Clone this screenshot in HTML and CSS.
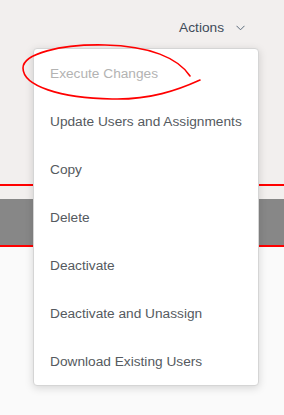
FILE: index.html
```html
<!DOCTYPE html>
<html lang="en">
<head>
  <meta charset="UTF-8">
  <meta name="viewport" content="width=device-width, initial-scale=1.0">
  <title>Users - Actions</title>
  <link rel="stylesheet" href="styles.css">
</head>
<body>
  <!-- Header with toolbar -->
  <div class="page-top">
    <div class="toolbar">
      <button class="actions-button">
        <span>Actions</span>
        <svg class="chevron" width="9" height="6" viewBox="0 0 9 6">
          <path d="M0.5 0.8 L4.5 4.8 L8.5 0.8" fill="none" stroke="#5b6b7b" stroke-width="1"/>
        </svg>
      </button>
    </div>
  </div>

  <div class="red-line"></div>
  <div class="gap"></div>
  <div class="gray-band"></div>
  <div class="red-line"></div>
  <div class="page-bottom"></div>

  <!-- Actions Menu -->
  <ul class="menu">
    <li class="menu-item disabled">Execute Changes</li>
    <li class="menu-item">Update Users and Assignments</li>
    <li class="menu-item">Copy</li>
    <li class="menu-item">Delete</li>
    <li class="menu-item">Deactivate</li>
    <li class="menu-item">Deactivate and Unassign</li>
    <li class="menu-item">Download Existing Users</li>
  </ul>

  <!-- Hand-drawn annotation -->
  <svg class="annotation" width="284" height="120" viewBox="0 0 284 120">
    <path d="M190 76 C178 58 150 46 105 45 C60 44 23 54 23 68 C23 86 60 98 112 99 C150 100 178 90 200 80"
          fill="none" stroke="#ff0000" stroke-width="1.6" stroke-linecap="round"/>
  </svg>
</body>
</html>
```

FILE: styles.css
```css
/* General Styles */
body {
  margin: 0;
  width: 284px;
  height: 415px;
  overflow: hidden;
  position: relative;
  font-family: 'Liberation Sans', Arial, sans-serif;
  background-color: #fafafa;
}

/* Header */
.page-top {
  height: 184px;
  background-color: #f2efee;
}

.toolbar {
  display: flex;
  justify-content: flex-end;
  padding: 17px 39px 0 0;
}

.actions-button {
  display: flex;
  align-items: center;
  gap: 12px;
  height: 20px;
  padding: 0;
  border: none;
  background: none;
  font-family: inherit;
  font-size: 13.7px;
  color: #3e4b59;
  cursor: pointer;
}

.chevron {
  margin-top: 1px;
}

/* Page stripes */
.red-line {
  height: 2px;
  background-color: #ff0000;
}

.gap {
  height: 13px;
  background-color: #f2efee;
}

.gray-band {
  height: 46px;
  background-color: #878787;
}

.page-bottom {
  height: 168px;
  background-color: #fafafa;
}

/* Menu */
.menu {
  position: absolute;
  top: 48px;
  left: 33px;
  width: 224px;
  margin: 0;
  padding: 0;
  list-style: none;
  background-color: #ffffff;
  border: 1px solid #d5d5d5;
  border-radius: 4px;
  box-shadow: 0 2px 8px rgba(0, 0, 0, 0.15);
}

.menu-item {
  height: 48px;
  display: flex;
  align-items: center;
  padding-left: 16px;
  font-size: 13.7px;
  color: #555a60;
  cursor: pointer;
}

.menu-item.disabled {
  color: #b3b3b3;
  cursor: default;
}

/* Annotation */
.annotation {
  position: absolute;
  top: 0;
  left: 0;
  pointer-events: none;
}
```
